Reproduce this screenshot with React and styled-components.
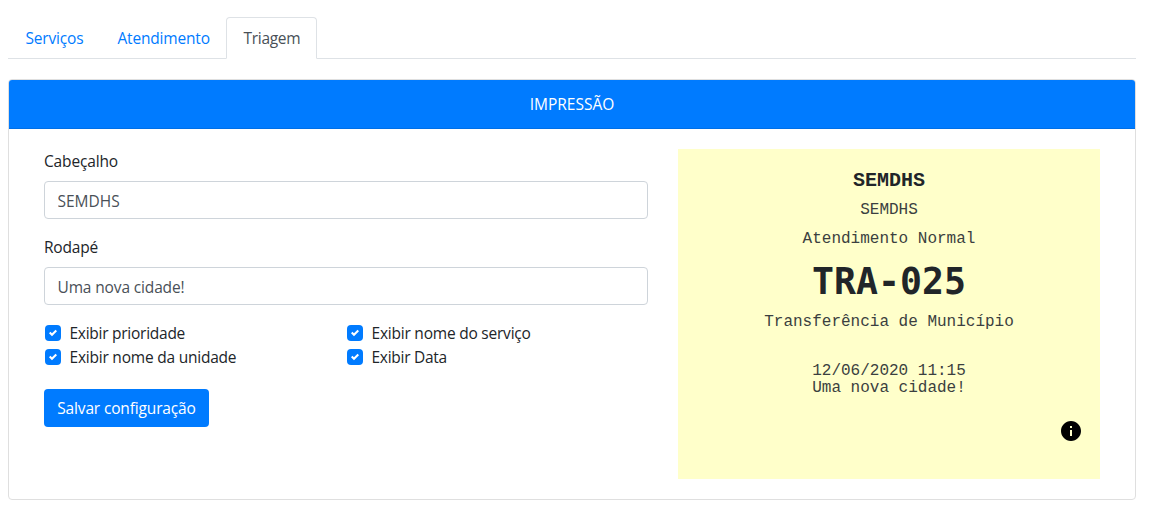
import React from "react";
import styled, { createGlobalStyle } from "styled-components";

const Global = createGlobalStyle`
  *, *::before, *::after { box-sizing: border-box; }
  body {
    margin: 0;
    background: #fff;
    color: #212529;
    font: 400 15.5px/24px "Segoe UI", "Open Sans", "Noto Sans", sans-serif;
  }
`;

const Page = styled.main`
  width: 1128px;
  margin: 17px 0 0 8px;
`;

const Tabs = styled.nav`
  display: flex;
  height: 42px;
  border-bottom: 1px solid #dee2e6;
`;

const Tab = styled.a`
  flex: none;
  width: ${(p) => p.$w}px;
  height: 42px;
  padding: 8px 0 8px 16.5px;
  border: 1px solid;
  border-color: ${(p) => (p.$active ? "#dee2e6 #dee2e6 #fff" : "transparent")};
  border-radius: 4px 4px 0 0;
  background: ${(p) => (p.$active ? "#fff" : "none")};
  color: ${(p) => (p.$active ? "#495057" : "#007bff")};
  white-space: nowrap;
  line-height: 25px;
`;

const Text = styled.span`
  letter-spacing: ${(p) => p.$ls || 0}px;
  white-space: nowrap;
`;

const Card = styled.section`
  height: 421px;
  margin-top: 20px;
  border: 1px solid #dfdfdf;
  border-radius: 4px;
`;

const CardHeader = styled.header`
  height: 49px;
  padding: 12px 0;
  border-bottom: 1px solid #006fe6;
  border-radius: 3px 3px 0 0;
  background: #007bff;
  color: #fff;
  text-align: center;
  line-height: 25px;
`;

const CardBody = styled.div`
  display: flex;
  gap: 30px;
  padding: 20px 35px;
`;

const Form = styled.form`
  width: 604px;
`;

const Field = styled.label`
  display: block;
  margin-bottom: 16px;
`;

const Input = styled.input`
  display: block;
  width: 100%;
  height: 38px;
  margin-top: 8px;
  padding: 7px 12px 5px 12.5px;
  border: 1px solid #ced4da;
  border-radius: 4px;
  background: #fff;
  color: #495057;
  font: inherit;
  letter-spacing: ${(p) => p.$ls || 0}px;
`;

const Checks = styled.div`
  display: grid;
  grid-template-columns: 302px 302px;
  grid-auto-rows: 24px;
`;

const Check = styled.label`
  display: flex;
  align-items: center;
  gap: 8.5px;
  padding-left: 1px;
`;

const Box = styled.span`
  display: grid;
  place-items: center;
  width: 16px;
  height: 16px;
  border-radius: 4px;
  background: #007bff;
`;

const Button = styled.button`
  display: block;
  width: 165px;
  height: 38px;
  margin-top: 20px;
  padding: 0;
  border: 0;
  border-radius: 4px;
  background: #007bff;
  color: #fff;
  font: inherit;
`;

const Ticket = styled.aside`
  display: flex;
  flex-direction: column;
  width: 422px;
  height: 330px;
  padding-top: 21px;
  background: #ffffca;
  text-align: center;
`;

const Line = styled.div`
  height: ${(p) => p.$h || 18}px;
  margin-top: ${(p) => p.$mt || 0}px;
  color: ${(p) => (p.$bold ? "#212529" : "#3b3f40")};
  font: ${(p) => (p.$bold ? 700 : 400)} ${(p) => p.$size || 16}px/${(p) => p.$h || 18}px
    "Courier New", "Liberation Mono", monospace;
`;

const Code = styled(Line)`
  font-family: Consolas, "DejaVu Sans Mono", monospace;
`;

const Info = styled.svg`
  align-self: flex-end;
  margin: 22px 17px 0 0;
`;

const CheckItem = ({ ls, children }) => (
  <Check>
    <Box>
      <svg width="8" height="8" viewBox="0 0 8 8">
        <path fill="#fff" d="M6.564.75l-3.59 3.612-1.538-1.55L0 4.26 2.974 7.25 8 2.193z" />
      </svg>
    </Box>
    <Text $ls={ls}>{children}</Text>
  </Check>
);

export default function App() {
  return (
    <>
      <Global />
      <Page>
        <Tabs>
          <Tab $w={92}><Text $ls={-0.17}>Serviços</Text></Tab>
          <Tab $w={126}><Text $ls={-0.18}>Atendimento</Text></Tab>
          <Tab $w={91} $active><Text $ls={-0.3}>Triagem</Text></Tab>
        </Tabs>
        <Card>
          <CardHeader><Text>IMPRESSÃO</Text></CardHeader>
          <CardBody>
            <Form>
              <Field>
                <Text $ls={-0.15}>Cabeçalho</Text>
                <Input defaultValue="SEMDHS" />
              </Field>
              <Field>
                <Text $ls={-0.2}>Rodapé</Text>
                <Input $ls={-0.14} defaultValue="Uma nova cidade!" />
              </Field>
              <Checks>
                <CheckItem ls={-0.26}>Exibir prioridade</CheckItem>
                <CheckItem ls={-0.22}>Exibir nome do serviço</CheckItem>
                <CheckItem ls={-0.22}>Exibir nome da unidade</CheckItem>
                <CheckItem ls={-0.28}>Exibir Data</CheckItem>
              </Checks>
              <Button type="button"><Text $ls={-0.15}>Salvar configuração</Text></Button>
            </Form>
            <Ticket>
              <Line $bold $size={20} $h={22}>SEMDHS</Line>
              <Line $mt={9}>SEMDHS</Line>
              <Line $mt={11}>Atendimento Normal</Line>
              <Code $bold $size={36.5} $h={48} $mt={10}>TRA-025</Code>
              <Line $mt={7}>Transferência de Município</Line>
              <Line $mt={31}>12/06/2020 11:15</Line>
              <Line $h={17}>Uma nova cidade!</Line>
              <Info width="24" height="24" viewBox="0 0 24 24">
                <path d="M12 2C6.48 2 2 6.48 2 12s4.48 10 10 10 10-4.48 10-10S17.52 2 12 2zm1 15h-2v-6h2v6zm0-8h-2V7h2v2z" />
              </Info>
            </Ticket>
          </CardBody>
        </Card>
      </Page>
    </>
  );
}
